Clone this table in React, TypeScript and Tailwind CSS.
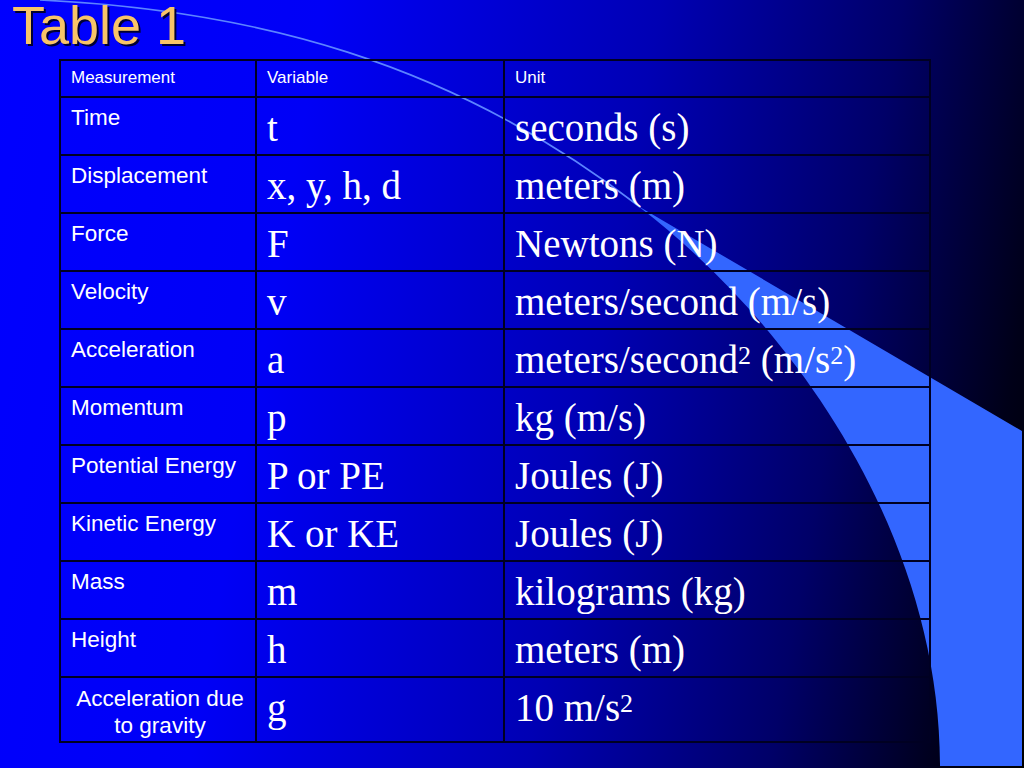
import React from "react";

type Row = { m: React.ReactNode; v: string; u: React.ReactNode; last?: boolean };

const Sup = ({ children }: { children: React.ReactNode }) => (
  <span className="relative -top-[9px] text-[26px]">{children}</span>
);

const rows: Row[] = [
  { m: "Time", v: "t", u: "seconds (s)" },
  { m: "Displacement", v: "x, y, h, d", u: "meters (m)" },
  { m: "Force", v: "F", u: "Newtons (N)" },
  { m: "Velocity", v: "v", u: "meters/second (m/s)" },
  {
    m: "Acceleration",
    v: "a",
    u: (
      <>
        meters/second<Sup>2</Sup> (m/s<Sup>2</Sup>)
      </>
    ),
  },
  { m: "Momentum", v: "p", u: "kg (m/s)" },
  { m: "Potential Energy", v: "P or PE", u: "Joules (J)" },
  { m: "Kinetic Energy", v: "K or KE", u: "Joules (J)" },
  { m: "Mass", v: "m", u: "kilograms (kg)" },
  { m: "Height", v: "h", u: "meters (m)" },
  {
    m: (
      <span className="block text-center">
        Acceleration due
        <br />
        to gravity
      </span>
    ),
    v: "g",
    u: (
      <>
        10 m/s<Sup>2</Sup>
      </>
    ),
    last: true,
  },
];

export default function App() {
  const cell = "border-r-2 border-b-2 border-[#000022]";
  const sans = "font-['Liberation_Sans',Arial,sans-serif]";
  const serif = "font-['Liberation_Serif','Times_New_Roman',serif]";
  return (
    <div className="relative w-[1024px] h-[768px] overflow-hidden bg-[linear-gradient(100deg,#0000ff_0%,#0000f6_28%,#0000b4_57%,#000068_78%,#000018_93%,#000000_100%)]">
      <svg
        className="absolute inset-0 w-full h-full"
        viewBox="0 0 1024 768"
        xmlns="http://www.w3.org/2000/svg"
      >
        <path
          d="M 638 206 L 1022 431 L 1022 766 L 940 766 C 940 540, 800 330, 638 206 Z"
          fill="#3366ff"
        />
        <path
          d="M 40 0 C 250 10, 450 60, 640 207"
          fill="none"
          stroke="#5c84ff"
          strokeWidth="1.6"
        />
      </svg>

      <div className="relative flex flex-col">
        <div
          className={`${sans} pl-[12px] h-[50px] text-[54px] leading-[50px] text-[#f8c468] [text-shadow:2px_2px_0_#000033]`}
        >
          Table 1
        </div>

        <div className="ml-[59px] mt-[9px] grid w-[872px] grid-cols-[196px_248px_426px] border-l-2 border-t-2 border-[#000022] text-white">
          <div className={`${cell} ${sans} h-[37px] pl-[10px] pt-[7px] text-[17px] leading-[20px]`}>
            Measurement
          </div>
          <div className={`${cell} ${sans} h-[37px] pl-[10px] pt-[7px] text-[17px] leading-[20px]`}>
            Variable
          </div>
          <div className={`${cell} ${sans} h-[37px] pl-[10px] pt-[7px] text-[17px] leading-[20px]`}>
            Unit
          </div>

          {rows.map((r, i) => (
            <React.Fragment key={i}>
              <div
                className={`${cell} ${sans} ${r.last ? "h-[65px] pt-[7px]" : "h-[58px] pt-[6px]"} pl-[10px] pr-[6px] text-[22.5px] leading-[27px]`}
              >
                {r.m}
              </div>
              <div
                className={`${cell} ${serif} ${r.last ? "h-[65px]" : "h-[58px]"} pl-[10px] pt-[8px] text-[39px] leading-[44px] whitespace-nowrap`}
              >
                {r.v}
              </div>
              <div
                className={`${cell} ${serif} ${r.last ? "h-[65px]" : "h-[58px]"} pl-[10px] pt-[8px] text-[39px] leading-[44px] whitespace-nowrap`}
              >
                {r.u}
              </div>
            </React.Fragment>
          ))}
        </div>
      </div>
    </div>
  );
}
